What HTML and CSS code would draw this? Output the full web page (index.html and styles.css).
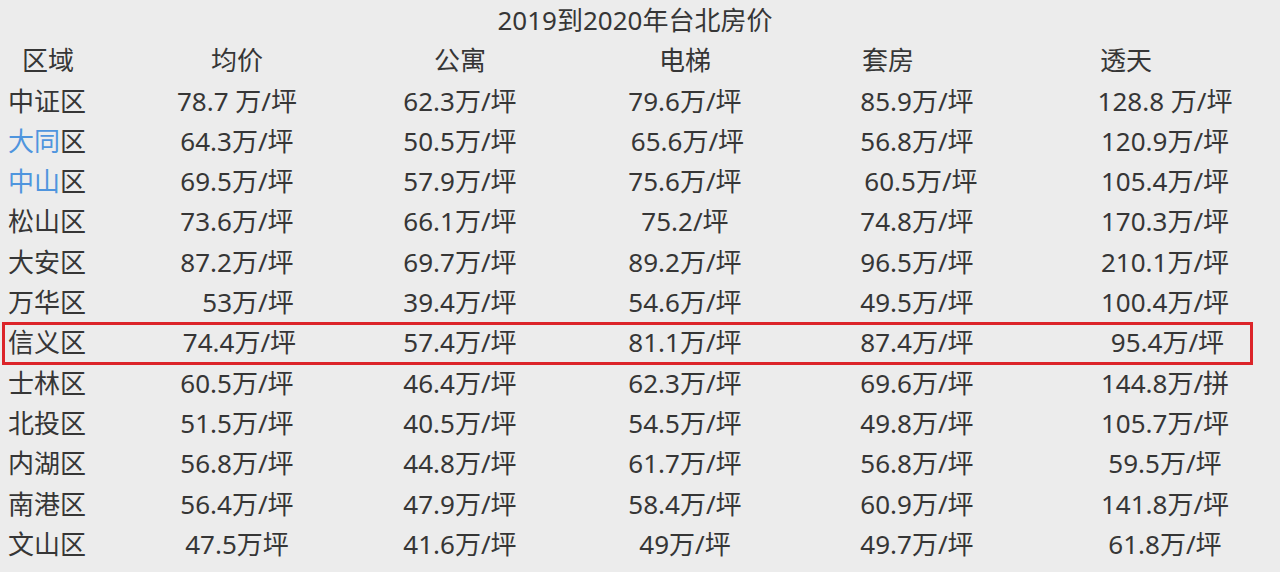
FILE: index.html
```html
<!DOCTYPE html>
<html lang="zh">
<head>
<meta charset="utf-8">
<title>2019到2020年台北房价</title>
<link rel="stylesheet" href="styles.css">
</head>
<body>
<div class="page">
  <div class="title">2019到2020年台北房价</div>
  <div class="row head">
    <div class="c c1">区域</div><div class="c c2">均价</div><div class="c c3">公寓</div><div class="c c4">电梯</div><div class="c c5">套房</div><div class="c c6">透天</div>
  </div>
  <div class="row"><div class="c c1">中证区</div><div class="c c2">78.7 万/坪</div><div class="c c3">62.3万/坪</div><div class="c c4">79.6万/坪</div><div class="c c5">85.9万/坪</div><div class="c c6">128.8 万/坪</div></div>
  <div class="row"><div class="c c1"><span class="blue">大同</span>区</div><div class="c c2">64.3万/坪</div><div class="c c3">50.5万/坪</div><div class="c c4 nudge-s">65.6万/坪</div><div class="c c5">56.8万/坪</div><div class="c c6">120.9万/坪</div></div>
  <div class="row"><div class="c c1"><span class="blue">中山</span>区</div><div class="c c2">69.5万/坪</div><div class="c c3">57.9万/坪</div><div class="c c4">75.6万/坪</div><div class="c c5 nudge-m">60.5万/坪</div><div class="c c6">105.4万/坪</div></div>
  <div class="row"><div class="c c1">松山区</div><div class="c c2">73.6万/坪</div><div class="c c3">66.1万/坪</div><div class="c c4">75.2/坪</div><div class="c c5">74.8万/坪</div><div class="c c6">170.3万/坪</div></div>
  <div class="row"><div class="c c1">大安区</div><div class="c c2">87.2万/坪</div><div class="c c3">69.7万/坪</div><div class="c c4">89.2万/坪</div><div class="c c5">96.5万/坪</div><div class="c c6">210.1万/坪</div></div>
  <div class="row"><div class="c c1">万华区</div><div class="c c2 nudge-l">53万/坪</div><div class="c c3">39.4万/坪</div><div class="c c4">54.6万/坪</div><div class="c c5">49.5万/坪</div><div class="c c6">100.4万/坪</div></div>
  <div class="row mark"><div class="c c1">信义区</div><div class="c c2 nudge-s">74.4万/坪</div><div class="c c3">57.4万/坪</div><div class="c c4">81.1万/坪</div><div class="c c5">87.4万/坪</div><div class="c c6 nudge-s">95.4万/坪</div></div>
  <div class="row"><div class="c c1">士林区</div><div class="c c2">60.5万/坪</div><div class="c c3">46.4万/坪</div><div class="c c4">62.3万/坪</div><div class="c c5">69.6万/坪</div><div class="c c6">144.8万/拼</div></div>
  <div class="row"><div class="c c1">北投区</div><div class="c c2">51.5万/坪</div><div class="c c3">40.5万/坪</div><div class="c c4">54.5万/坪</div><div class="c c5">49.8万/坪</div><div class="c c6">105.7万/坪</div></div>
  <div class="row"><div class="c c1">内湖区</div><div class="c c2">56.8万/坪</div><div class="c c3">44.8万/坪</div><div class="c c4">61.7万/坪</div><div class="c c5">56.8万/坪</div><div class="c c6">59.5万/坪</div></div>
  <div class="row"><div class="c c1">南港区</div><div class="c c2">56.4万/坪</div><div class="c c3">47.9万/坪</div><div class="c c4">58.4万/坪</div><div class="c c5">60.9万/坪</div><div class="c c6">141.8万/坪</div></div>
  <div class="row"><div class="c c1">文山区</div><div class="c c2">47.5万坪</div><div class="c c3">41.6万/坪</div><div class="c c4">49万/坪</div><div class="c c5">49.7万/坪</div><div class="c c6">61.8万/坪</div></div>
</div>
</body>
</html>
```
FILE: styles.css
```css
html, body {
  margin: 0;
  padding: 0;
  background: #ececec;
}
body {
  font-family: "Noto Sans", "Noto Sans CJK SC", sans-serif;
  font-size: 26px;
  color: #363636;
  width: 1280px;
  height: 572px;
  overflow: hidden;
}
.page {
  display: flex;
  flex-direction: column;
}
.title {
  height: 40.3px;
  line-height: 40.3px;
  text-align: center;
  padding-right: 10px;
  white-space: nowrap;
}
.row {
  position: relative;
  display: grid;
  grid-template-columns: 120px 234px 212px 238px 226px 250px;
  height: 40.3px;
  line-height: 40.3px;
}
.c {
  text-align: center;
  white-space: pre;
}
.c1 {
  text-align: left;
  padding-left: 8px;
}
.c6 {
  padding-left: 20px;
}
.head .c1 {
  padding-left: 22px;
}
.head .c5 {
  padding-right: 58px;
}
.head .c6 {
  padding-right: 78px;
}
.nudge-s {
  padding-left: 5px;
}
.c6.nudge-s {
  padding-left: 25px;
}
.nudge-m {
  padding-left: 8px;
}
.nudge-l {
  padding-left: 22px;
}
.blue {
  color: #4f95de;
}
.mark::after {
  content: "";
  position: absolute;
  left: 2px;
  right: 27px;
  top: 0;
  bottom: -2px;
  border: 3px solid #dc2429;
  pointer-events: none;
}
```
